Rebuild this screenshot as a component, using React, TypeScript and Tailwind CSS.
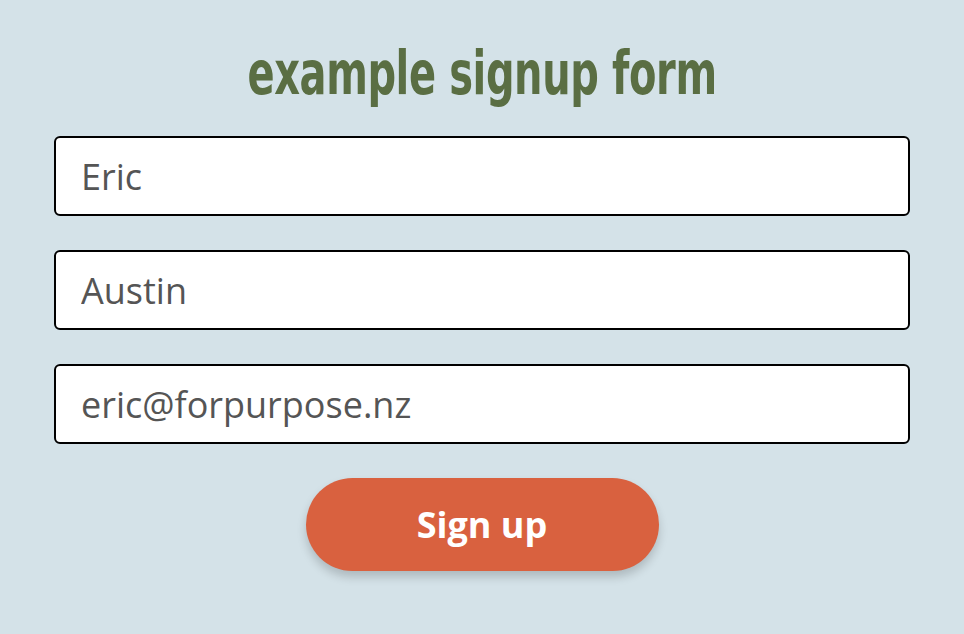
import React from "react";

export default function App() {
  return (
    <div className="min-h-screen w-full bg-[#d4e2e8] flex flex-col items-center pt-[39px] px-[54px]">
      <h1
        className="text-[#5a6e43] text-[60px] leading-[68px] font-bold whitespace-nowrap scale-x-[0.74] tracking-[-0.5px]"
        style={{ fontFamily: '"DejaVu Sans Condensed", "DejaVu Sans", sans-serif' }}
      >
        example signup form
      </h1>
      <form className="w-full flex flex-col gap-[34px] mt-[29px]" onSubmit={(e) => e.preventDefault()}>
        {["Eric", "Austin", "eric@forpurpose.nz"].map((v) => (
          <input
            key={v}
            defaultValue={v}
            className="w-full h-[80px] bg-white border-2 border-black rounded-[6px] px-[25px] text-[36px] text-[#555555] outline-none font-['Open_Sans',sans-serif]"
          />
        ))}
        <div className="flex justify-center">
          <button
            type="submit"
            className="w-[353px] h-[93px] rounded-full bg-[#d9613f] text-white text-[36px] font-bold shadow-[0_6px_10px_rgba(0,0,0,0.18)] font-['Open_Sans',sans-serif]"
          >
            Sign up
          </button>
        </div>
      </form>
    </div>
  );
}
